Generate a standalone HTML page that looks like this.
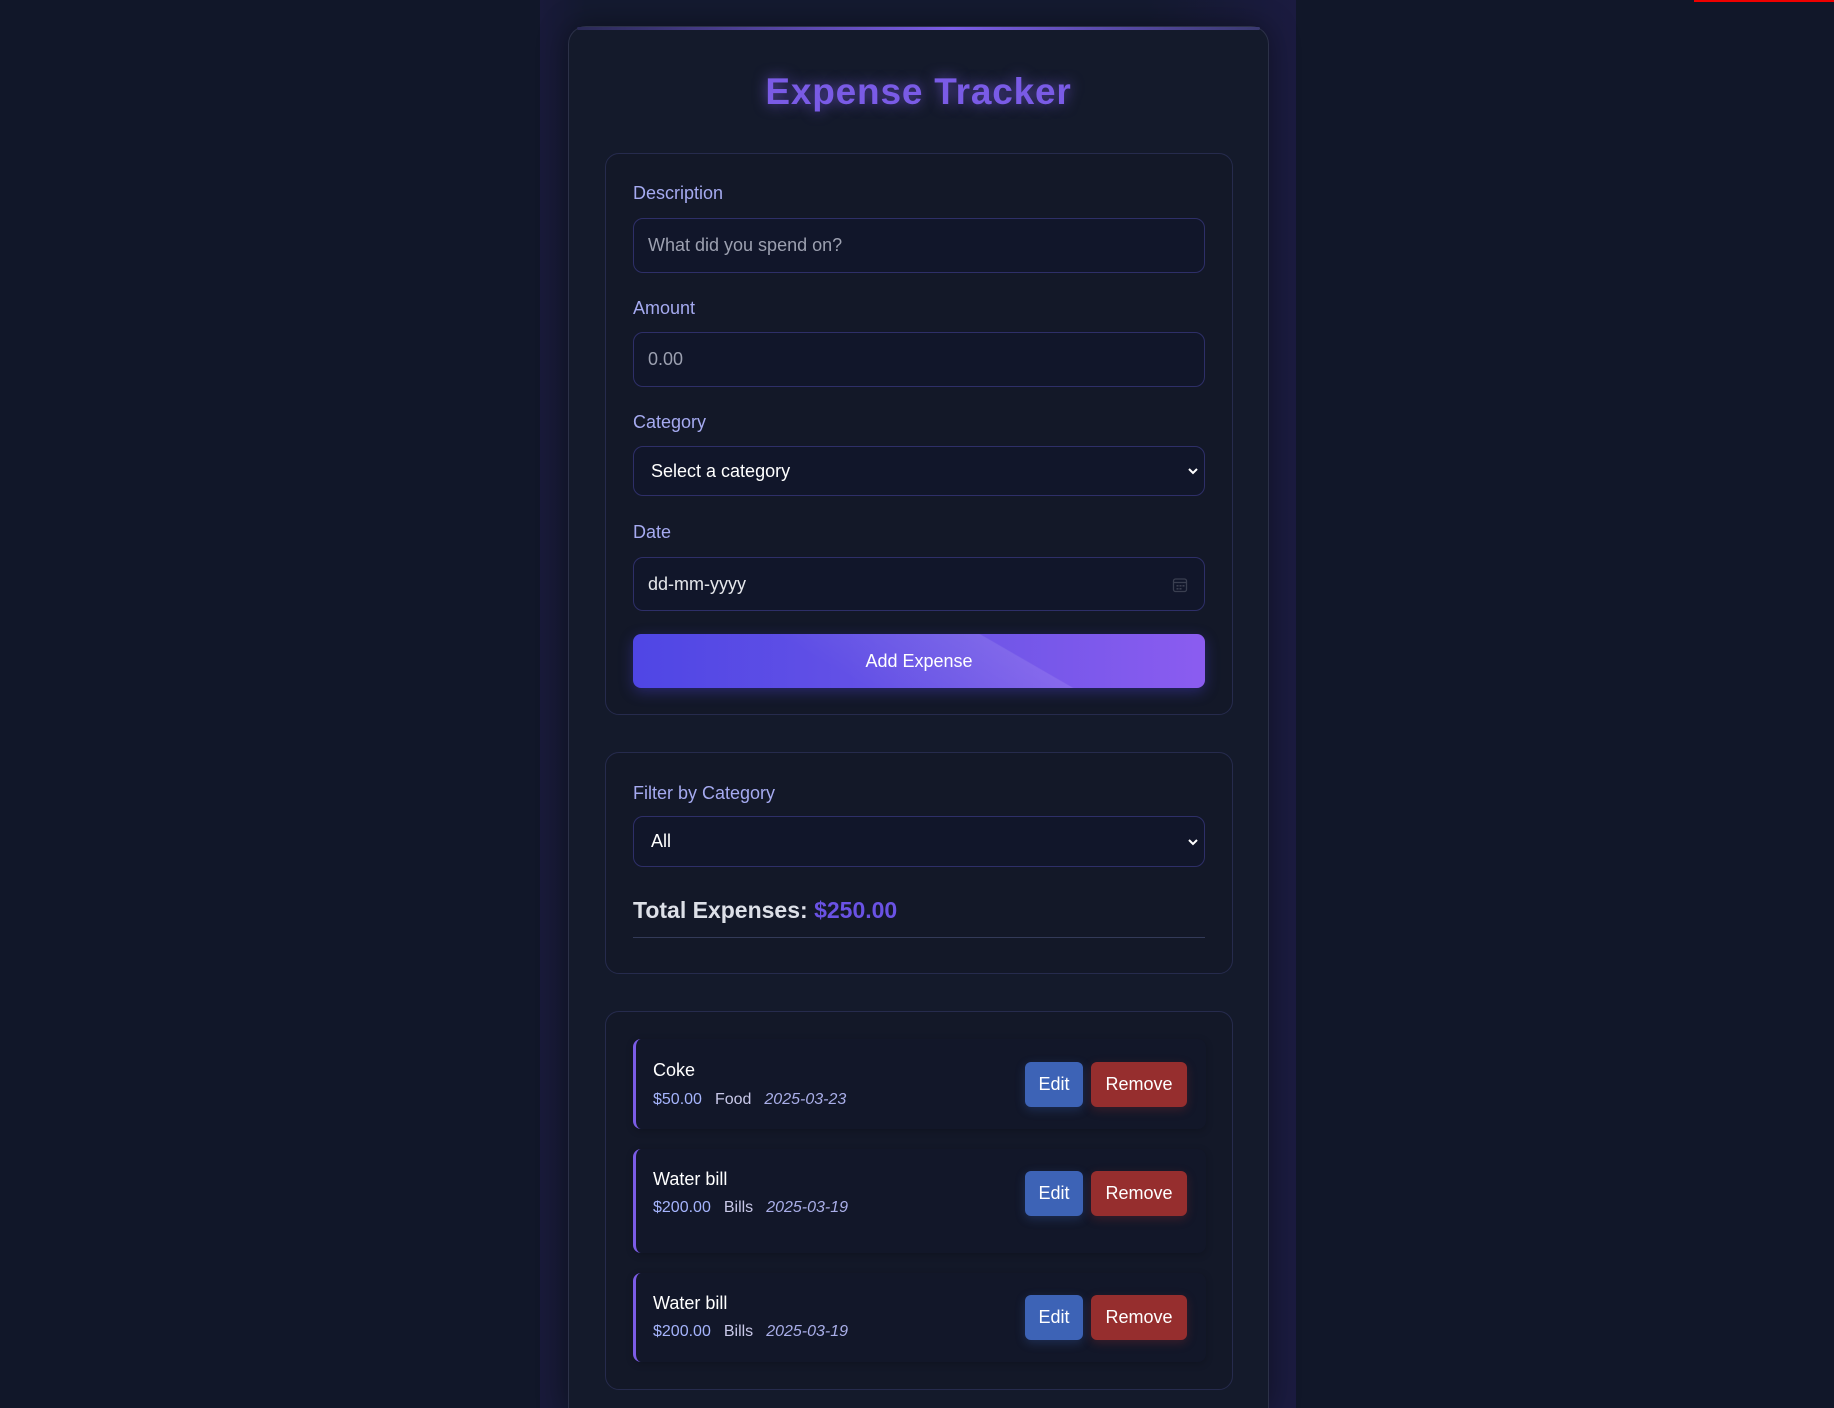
<!DOCTYPE html>
<html><head><meta charset="utf-8"><style>
*{box-sizing:border-box;margin:0;padding:0}
html,body{width:1834px;height:1408px;overflow:hidden}
body{background:#111729;font-family:"Liberation Sans",sans-serif;position:relative}
.band{position:absolute;left:540px;top:0;width:756px;height:1408px;background:linear-gradient(90deg,#191a3a 0%,#141a30 6%,#141a30 80%,#1b1b40 100%)}
.red{position:absolute;left:1694px;top:0;width:140px;height:2px;background:#e00}
.card{position:absolute;left:568px;top:26px;width:701px;height:1382px;background:#141a2b;border:1px solid #2c3148;border-bottom:none;border-radius:18px 18px 0 0;box-shadow:0 0 30px rgba(0,0,0,.4)}
.card:before{content:"";position:absolute;left:8px;right:8px;top:0;height:3px;background:linear-gradient(90deg,#2a2a55,#7b5ce6 55%,#3a3a70);border-radius:2px}
h1{position:absolute;left:0;right:0;top:44px;text-align:center;font-size:37px;font-weight:bold;letter-spacing:0.8px;color:#7a5be6;text-shadow:0 0 14px rgba(123,92,230,.7)}
.sec{position:absolute;left:605px;width:628px;background:#131828;border:1px solid #262b4d;border-radius:14px}
.lbl{position:absolute;left:633px;font-size:18px;color:#a5aaf0}
.inp{position:absolute;left:633px;width:572px;background:#11162a;border:1px solid #2e2f68;border-radius:10px;font-size:18px;color:#9ca0b0;padding-left:14px;display:flex;align-items:center}
.sel{color:#fff;padding-left:17px}
.chev{position:absolute;right:5px;top:50%;margin-top:-4px}
.btn{position:absolute;left:633px;top:634px;width:572px;height:54px;border-radius:8px;background:linear-gradient(90deg,#4f46e5,#6b55e6 55%,#8b5cf0);color:#fff;font-size:18px;display:flex;align-items:center;justify-content:center;overflow:hidden;box-shadow:0 4px 14px rgba(79,70,229,.35)}
.btn:before{content:"";position:absolute;inset:0;background:linear-gradient(30deg,transparent 35%,rgba(255,255,255,.1) 66%,transparent 66.3%)}
.btn span{position:relative}
.tot{position:absolute;left:633px;top:897px;font-size:23px;font-weight:bold;color:#dde0e8}
.tot b{color:#6a52e4}
.hr{position:absolute;left:633px;top:937px;width:572px;height:1px;background:#333a58}
.item{position:absolute;left:633px;width:573px;background:#121729;border-left:3px solid #7b5ce6;border-radius:8px;box-shadow:0 2px 8px rgba(0,0,0,.2)}
.nm{position:absolute;left:17px;font-size:18px;color:#fff}
.mt{position:absolute;left:17px;font-size:16px;color:#a5b4fc}
.mt .c{color:#c8c8e8;margin:0 13px}
.mt i{color:#a9aee8}
.e,.r{position:absolute;height:45px;border-radius:6px;color:#fff;font-size:18px;display:flex;align-items:center;justify-content:center}
.e{left:389px;width:58px;background:#3d63b6;box-shadow:0 3px 10px rgba(61,99,182,.3)}
.r{left:455px;width:96px;background:#962e2e;box-shadow:0 3px 10px rgba(150,46,46,.3)}
</style></head><body>
<div class="band"></div>
<div class="red"></div>
<div class="card"><h1>Expense Tracker</h1></div>

<div class="sec" style="top:153px;height:562px"></div>
<div class="lbl" style="top:183px">Description</div>
<div class="inp" style="top:218px;height:55px">What did you spend on?</div>
<div class="lbl" style="top:298px">Amount</div>
<div class="inp" style="top:332px;height:55px">0.00</div>
<div class="lbl" style="top:412px">Category</div>
<div class="inp sel" style="top:446px;height:50px">Select a category<svg class="chev" width="12" height="8" viewBox="0 0 12 8"><path d="M2 2l4 4 4-4" fill="none" stroke="#fff" stroke-width="2"/></svg></div>
<div class="lbl" style="top:522px">Date</div>
<div class="inp" style="top:557px;height:54px;color:#e5e7eb">dd-mm-yyyy<svg style="position:absolute;right:16px;top:19px" width="16" height="16" viewBox="0 0 16 16"><rect x="1.5" y="2" width="13" height="12.5" rx="2" fill="none" stroke="#3a3f50" stroke-width="1.3"/><line x1="1.5" y1="5.5" x2="14.5" y2="5.5" stroke="#3a3f50" stroke-width="1.3"/><rect x="4.5" y="8" width="2" height="1.6" fill="#3a3f50"/><rect x="7.5" y="8" width="2" height="1.6" fill="#3a3f50"/><rect x="10.5" y="8" width="2" height="1.6" fill="#3a3f50"/><rect x="4.5" y="11" width="2" height="1.6" fill="#3a3f50"/><rect x="7.5" y="11" width="2" height="1.6" fill="#3a3f50"/></svg></div>
<div class="btn"><span>Add Expense</span></div>

<div class="sec" style="top:752px;height:222px"></div>
<div class="lbl" style="top:783px">Filter by Category</div>
<div class="inp sel" style="top:816px;height:51px">All<svg class="chev" width="12" height="8" viewBox="0 0 12 8"><path d="M2 2l4 4 4-4" fill="none" stroke="#fff" stroke-width="2"/></svg></div>
<div class="tot">Total Expenses: <b>$250.00</b></div>
<div class="hr"></div>

<div class="sec" style="top:1011px;height:379px"></div>
<div class="item" style="top:1039px;height:90px">
<div class="nm" style="top:21px">Coke</div><div class="mt" style="top:52px">$50.00<span class="c">Food</span><i>2025-03-23</i></div>
<div class="e" style="top:23px">Edit</div><div class="r" style="top:23px">Remove</div></div>
<div class="item" style="top:1149px;height:104px">
<div class="nm" style="top:20px">Water bill</div><div class="mt" style="top:50px">$200.00<span class="c">Bills</span><i>2025-03-19</i></div>
<div class="e" style="top:22px">Edit</div><div class="r" style="top:22px">Remove</div></div>
<div class="item" style="top:1273px;height:89px">
<div class="nm" style="top:20px">Water bill</div><div class="mt" style="top:50px">$200.00<span class="c">Bills</span><i>2025-03-19</i></div>
<div class="e" style="top:22px">Edit</div><div class="r" style="top:22px">Remove</div></div>
</body></html>
